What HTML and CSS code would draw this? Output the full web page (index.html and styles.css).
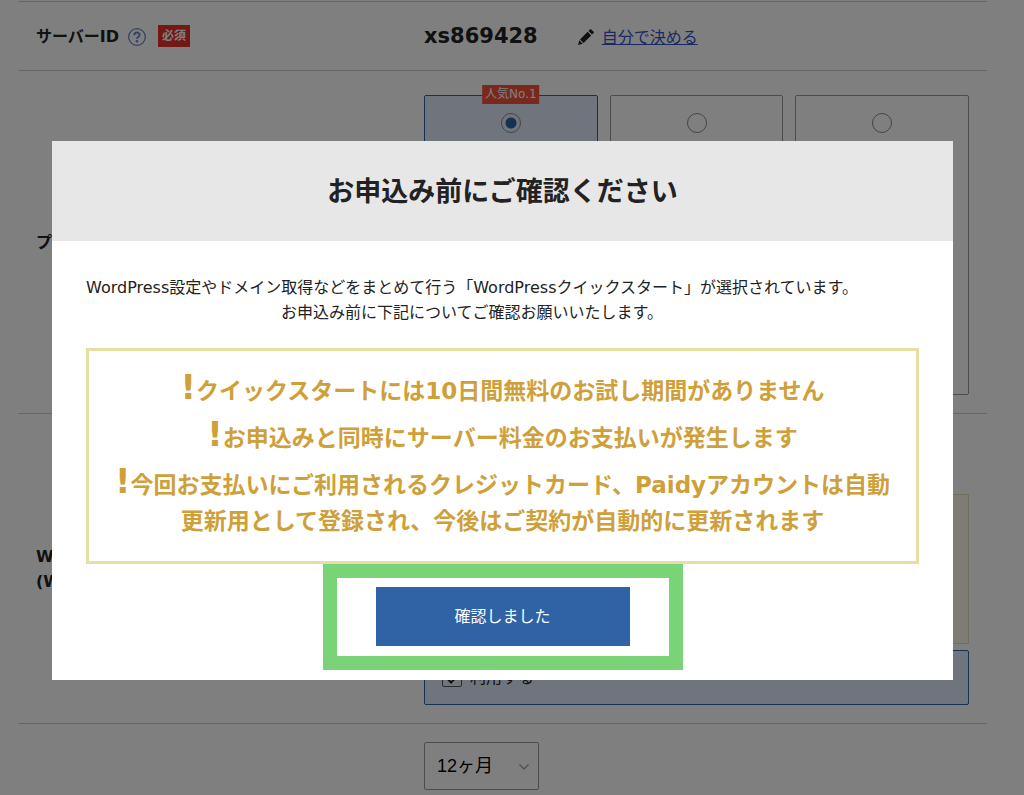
FILE: index.html
```html
<!DOCTYPE html>
<html lang="ja">

<head>
    <meta charset="UTF-8">
    <meta name="viewport" content="width=device-width, initial-scale=1.0">
    <title>お申し込み</title>
    <link rel="stylesheet" href="styles.css">
</head>

<body>
    <form class="order-form">
        <div class="row row-id">
            <div class="row-label">
                <span>サーバーID</span>
                <svg class="help" viewBox="0 0 18 18" width="18" height="18">
                    <circle cx="9" cy="9" r="8.3" fill="none" stroke="currentColor" stroke-width="1.3" />
                    <path d="M6.3 7.2C6.3 3.6 11.9 3.8 11.7 7C11.5 8.8 9 8.7 9 10.8" fill="none" stroke="currentColor" stroke-width="2" />
                    <circle cx="9" cy="13.2" r="1.3" fill="currentColor" />
                </svg>
                <span class="required">必須</span>
            </div>
            <div class="row-body server-id">
                <strong>xs869428</strong>
                <a class="edit-link" href="#">
                    <svg viewBox="0 0 16 16" width="16" height="16">
                        <path d="M0 16L1.3 11.2L4.8 14.7Z M2 10.4L9.6 2.8L13.2 6.4L5.6 14Z M10.4 2L12 .4Q12.6 -.2 13.3 .4L15.6 2.7Q16.2 3.3 15.6 4L14 5.6Z" fill="#222" />
                    </svg>
                    <span>自分で決める</span>
                </a>
            </div>
        </div>

        <div class="row row-plan">
            <div class="row-label">プラン</div>
            <div class="row-body plans">
                <label class="plan selected">
                    <span class="popular">人気No.1</span>
                    <input type="radio" name="plan" aria-label="プラン1" checked>
                </label>
                <label class="plan"><input type="radio" name="plan" aria-label="プラン2"></label>
                <label class="plan"><input type="radio" name="plan" aria-label="プラン3"></label>
            </div>
        </div>

        <div class="row row-wp">
            <div class="row-label">WordPress<br>(WordPress)</div>
            <div class="row-body">
                <div class="notice"></div>
                <label class="use-check">
                    <input type="checkbox" checked>
                    <span>利用する</span>
                </label>
            </div>
        </div>

        <div class="row">
            <div class="row-label"></div>
            <div class="row-body">
                <div class="select-wrap">
                    <select class="period" aria-label="契約期間">
                        <option>12ヶ月</option>
                    </select>
                    <svg class="chevron" viewBox="0 0 10 6" width="10" height="6">
                        <path d="M.5 .5L5 5L9.5 .5" fill="none" stroke="#999" stroke-width="1.2" />
                    </svg>
                </div>
            </div>
        </div>
    </form>

    <div class="overlay">
        <div class="modal" role="dialog" aria-labelledby="modal-title">
            <h2 class="modal-title" id="modal-title">お申込み前にご確認ください</h2>
            <div class="modal-body">
                <p class="lead">WordPress設定やドメイン取得などをまとめて行う「WordPressクイックスタート」が選択されています。<br>お申込み前に下記についてご確認お願いいたします。</p>
                <ul class="warnings">
                    <li>クイックスタートには10日間無料のお試し期間がありません</li>
                    <li>お申込みと同時にサーバー料金のお支払いが発生します</li>
                    <li>今回お支払いにご利用されるクレジットカード、Paidyアカウントは自動更新用として登録され、今後はご契約が自動的に更新されます</li>
                </ul>
                <div class="highlight">
                    <button type="button" class="confirm-btn">確認しました</button>
                </div>
            </div>
        </div>
    </div>
</body>

</html>
```

FILE: styles.css
```css
* {
    box-sizing: border-box;
}

body {
    margin: 0;
    font-family: Verdana, 'DejaVu Sans', 'Noto Sans CJK JP', sans-serif;
    font-size: 16px;
    line-height: 25px;
    color: #222;
    background-color: #fff;
    overflow: hidden;
}

/* order form */
.order-form {
    margin: 1px 37px 0 18px;
}

.row {
    display: flex;
    align-items: center;
    padding: 18px;
    border-top: 1px solid #ccc;
}

.row-id {
    min-height: 69px;
}

.row-plan {
    padding-top: 24px;
}

.row-plan .row-label {
    margin-top: -6px;
}

.row-wp {
    padding-top: 80px;
}

.row-wp .row-label {
    margin-top: -62px;
}

.row-label {
    flex: 0 0 388px;
    display: flex;
    align-items: center;
    font-weight: bold;
}

.row-body {
    flex: 1;
}

.help {
    margin: 2px 12px 0 9px;
    color: #6b84c4;
}

.required {
    padding: 0 4px;
    background-color: #e8302a;
    color: #fff;
    font-size: 12px;
    line-height: 22px;
}

.server-id {
    display: flex;
    align-items: center;
    gap: 40px;
}

.server-id strong {
    font-size: 21px;
}

.edit-link {
    display: flex;
    align-items: center;
    gap: 8px;
    padding-top: 2px;
    color: #2f55c8;
    text-decoration: none;
}

.edit-link span {
    text-decoration: underline;
}

.plans {
    display: flex;
    gap: 12px;
}

.plan {
    position: relative;
    flex: 1;
    height: 300px;
    padding-top: 17px;
    border: 1px solid #999;
    border-radius: 2px;
    text-align: center;
}

.selected {
    background-color: #dfe9fb;
    border-color: #2f63a5;
}

.popular {
    position: absolute;
    top: -11px;
    left: 50%;
    transform: translateX(-50%);
    padding: 0 3px;
    background-color: #f0503a;
    color: #fff;
    font-size: 12px;
    line-height: 19px;
    white-space: nowrap;
}

.plan input {
    appearance: none;
    display: block;
    width: 20px;
    height: 20px;
    margin: 0 auto;
    border: 1px solid #888;
    border-radius: 50%;
    background-color: #fff;
}

.plan input:checked {
    background: radial-gradient(circle, #2f63a5 5px, #dfe9fb 6px);
}

.notice {
    height: 150px;
    margin-bottom: 6px;
    border: 1px solid #e2dfb8;
    background-color: #fcf9ea;
}

.use-check {
    display: flex;
    align-items: center;
    gap: 8px;
    height: 55px;
    padding: 0 17px;
    border: 1px solid #2f63a5;
    border-radius: 2px;
    background-color: #dfe9fb;
}

.use-check input {
    display: grid;
    place-items: center;
    width: 20px;
    height: 18px;
    margin: 0;
    appearance: none;
    border: 1px solid #555;
    border-radius: 2px;
}

.use-check input:checked::after {
    content: "";
    width: 5px;
    height: 9px;
    border: solid #222;
    border-width: 0 2px 2px 0;
    transform: rotate(45deg);
}

.select-wrap {
    position: relative;
    width: 115px;
}

.period {
    display: block;
    width: 100%;
    height: 48px;
    padding: 0 12px;
    appearance: none;
    border: 1px solid #999;
    border-radius: 2px;
    background-color: #fff;
    color: #000;
    font-family: 'Liberation Sans', 'Noto Sans CJK JP', sans-serif;
    font-size: 18px;
}

.chevron {
    position: absolute;
    top: 22px;
    right: 10px;
}

/* modal */
.overlay {
    position: fixed;
    inset: 0;
    padding: 141px 71px 0 52px;
    background-color: rgba(0, 0, 0, 0.5);
}

.modal {
    background-color: #fff;
}

.modal-title {
    margin: 0;
    padding: 31px 30px 29px;
    background-color: #e7e7e7;
    font-size: 27px;
    line-height: 40px;
    text-align: center;
}

.modal-body {
    padding: 34px 34px 10px;
}

.lead {
    width: fit-content;
    margin: 0 0 23px;
    text-align: center;
}

.warnings {
    display: flex;
    flex-direction: column;
    gap: 11px;
    margin: 0;
    padding: 22px;
    border: 3px solid #e5dfa4;
    list-style: none;
    color: #cfa03a;
    font-size: 23px;
    font-weight: bold;
    line-height: 36px;
    text-align: center;
}

.warnings li::before {
    content: "!";
    font-size: 34px;
    line-height: 1px;
}

.highlight {
    width: 360px;
    margin: 0 auto;
    padding: 9px 39px 10px;
    border: 14px solid #7bd378;
}

.confirm-btn {
    display: block;
    width: 100%;
    height: 59px;
    padding: 0 0 3px;
    border: none;
    background-color: #2f63a5;
    color: #fff;
    font-family: inherit;
    font-size: 16px;
    cursor: pointer;
}
```
